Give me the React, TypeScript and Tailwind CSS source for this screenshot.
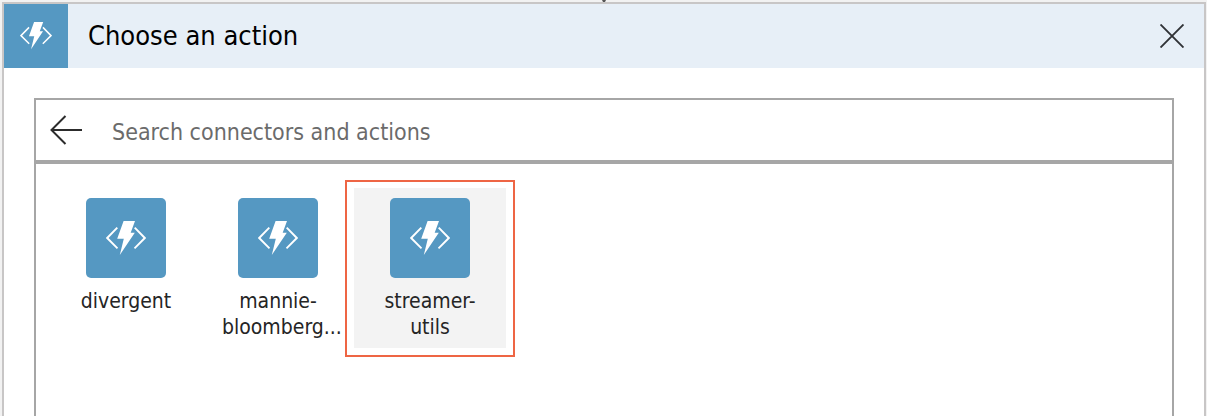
import React from 'react';

const connectors = [
  { name: 'divergent', selected: false },
  { name: 'mannie-bloomberg...', selected: false },
  { name: 'streamer-utils', selected: true },
];

function FunctionIcon({ className }: { className: string }) {
  return (
    <svg viewBox="0 0 40 34" className={className} aria-hidden="true">
      <path d="M11.3 6.7 1.2 17l10.3 10.3M28.7 6.7 38.8 17 28.5 27.3" fill="none" stroke="#fff" strokeWidth="1.9" />
      <path d="M17.6 0h11.4l-4.3 11.7h4.1L13.8 34l4-16.2h-6.6z" fill="#fff" />
    </svg>
  );
}

function Connector({ name, selected }: { name: string; selected: boolean }) {
  return (
    <li className="relative">
      <button
        type="button"
        className={`flex h-40 w-38 flex-col items-center px-5 pt-2.5 ${selected ? 'bg-[#f3f3f3]' : ''}`}
      >
        <span className="flex size-20 shrink-0 items-center justify-center rounded-[5px] bg-[#5598c2]">
          <FunctionIcon className="w-10" />
        </span>
        <span className="mt-2.5 w-full text-[21px] leading-[26px] text-[#252525]">{name}</span>
      </button>
      {selected && (
        <span className="pointer-events-none absolute -inset-x-[9px] -top-2 -bottom-[9px] border-2 border-[#ee6544]" />
      )}
    </li>
  );
}

export default function App() {
  return (
    <div className="flex min-h-screen flex-col bg-[#f2f2f2] pr-px pl-0.5 font-['DejaVu_Sans_Condensed','DejaVu_Sans',sans-serif]">
      <svg viewBox="0 0 4 2" className="h-0.5 w-1 self-center" aria-hidden="true">
        <path d="M0 0h4L3 2H1z" fill="#555" />
      </svg>
      <main className="flex grow flex-col border-2 border-b-0 border-[#c8c6c6] bg-white">
        <header className="flex h-16 items-center bg-[#e7eff7]">
          <span className="flex size-16 items-center justify-center bg-[#5598c2]">
            <FunctionIcon className="w-8" />
          </span>
          <h1 className="ml-5 grow text-[27px] text-black">Choose an action</h1>
          <button type="button" aria-label="Close" className="mr-5 p-0">
            <svg viewBox="0 0 24 24" className="size-6" fill="none" stroke="#303236" strokeWidth="1.9">
              <path d="m.5.5 23 23m0-23-23 23" />
            </svg>
          </button>
        </header>
        <div className="flex grow flex-col px-[30px] pt-[30px]">
          <div className="flex h-16.5 items-center border-2 border-b-4 border-[#a6a6a6] pl-3.5">
            <button type="button" aria-label="Back">
              <svg viewBox="0 0 32 30" className="w-8" fill="none" stroke="#2c2c2c" strokeWidth="2">
                <path d="M32 15H1.5M15.5 1l-14 14 14 14" />
              </svg>
            </button>
            <input
              type="text"
              aria-label="Search connectors and actions"
              placeholder="Search connectors and actions"
              className="ml-[30px] grow bg-transparent pt-1 text-[23px] text-[#252525] outline-none placeholder:text-[#6b6b6b]"
            />
          </div>
          <ul className="flex grow items-start border-x-2 border-[#a6a6a6] px-3.5 pt-6">
            {connectors.map((c) => (
              <Connector key={c.name} {...c} />
            ))}
          </ul>
        </div>
      </main>
    </div>
  );
}
